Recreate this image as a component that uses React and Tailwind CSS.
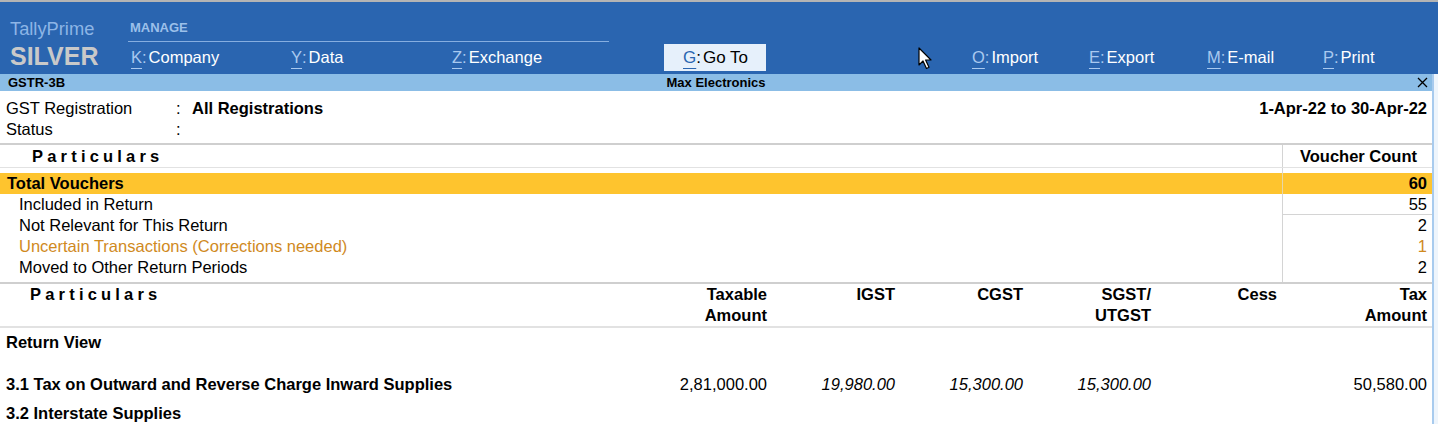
import React from 'react';

const font = { fontFamily: '"Liberation Sans", Arial, sans-serif' };

function MenuItem({ k, label, width }) {
    return (
        <div className={`h-[27px] flex items-center text-[16.5px] ${width}`}>
            <span className="text-[#a9c9ef] underline underline-offset-[5px] decoration-1">{k}</span>
            <span className="text-[#a9c9ef] mr-[2px]">:</span>
            <span className="text-white">{label}</span>
        </div>
    );
}

function Cursor() {
    return (
        <svg className="absolute left-[918px] top-[45px]" width="16" height="24" viewBox="0 0 16 24">
            <path d="M1 1 L1 18 L5 14 L8.5 21.5 L11 20.3 L7.6 13 L13 13 Z" fill="#fff" stroke="#000" strokeWidth="1.2" strokeLinejoin="round" />
        </svg>
    );
}

export default function App() {
    const upperRows = [
        { label: 'Included in Return', count: '55', line: true },
        { label: 'Not Relevant for This Return', count: '2' },
        { label: 'Uncertain Transactions (Corrections needed)', count: '1', warn: true },
        { label: 'Moved to Other Return Periods', count: '2' },
    ];

    return (
        <div className="w-[1438px] h-[434px] overflow-hidden bg-white text-black" style={font}>
            <div className="h-[2px] bg-[#b4b4b4]" />

            {/* Top bar */}
            <div className="relative h-[72px] bg-[#2a65b0] flex">
                <div className="w-[128px] pl-[10px] pt-[17px] flex flex-col">
                    <span className="text-[18.3px] leading-[20px] text-[#8db5e6]">TallyPrime</span>
                    <span className="text-[25px] leading-[30px] font-bold text-[#c9c9c9] mt-[2px]">SILVER</span>
                </div>
                <div className="flex-1 flex flex-col">
                    <div className="h-[40px] w-[481px] border-b border-[#86aee0] flex items-end pb-[6px] pl-[2px]">
                        <span className="text-[13px] leading-[14px] font-bold text-[#9cc0ea]">MANAGE</span>
                    </div>
                    <div className="flex items-start pt-[2px] pl-[3px]">
                        <MenuItem k="K" label="Company" width="w-[160px]" />
                        <MenuItem k="Y" label="Data" width="w-[161px]" />
                        <MenuItem k="Z" label="Exchange" width="w-[212px]" />
                        <div className="h-[27px] w-[102px] bg-[#e6f0fb] flex items-center pl-[19px] text-[17px] text-black">
                            <span className="text-[#2a65b0] underline underline-offset-[5px] decoration-1">G</span>
                            <span className="mr-[2px]">:</span>
                            <span>Go To</span>
                        </div>
                        <div className="w-[206px]" />
                        <MenuItem k="O" label="Import" width="w-[117px]" />
                        <MenuItem k="E" label="Export" width="w-[118px]" />
                        <MenuItem k="M" label="E-mail" width="w-[116px]" />
                        <MenuItem k="P" label="Print" width="w-[80px]" />
                    </div>
                </div>
                <Cursor />
            </div>

            <div className="flex">
                <div className="w-[1432px]">
                    {/* Title bar */}
                    <div className="h-[17px] bg-[#8bbde6] grid grid-cols-[1fr_auto_1fr] items-center text-[13px] font-bold leading-[17px]">
                        <span className="pl-[8px]">GSTR-3B</span>
                        <span>Max Electronics</span>
                        <div className="flex justify-end pr-[4px]">
                            <svg width="11" height="11" viewBox="0 0 11 11">
                                <path d="M1 1 L10 10 M10 1 L1 10" stroke="#000" strokeWidth="1.3" />
                            </svg>
                        </div>
                    </div>

                    {/* Info */}
                    <div className="pt-[7px] text-[16.5px]">
                        <div className="h-[21px] flex items-center">
                            <span className="w-[176px] pl-[6px]">GST Registration</span>
                            <span className="w-[16px]">:</span>
                            <span className="font-bold">All Registrations</span>
                            <span className="ml-auto pr-[5px] font-bold">1-Apr-22 to 30-Apr-22</span>
                        </div>
                        <div className="h-[21px] flex items-center">
                            <span className="w-[176px] pl-[6px]">Status</span>
                            <span className="w-[16px]">:</span>
                        </div>
                    </div>

                    {/* Voucher table */}
                    <div className="mt-[3px] border-t-2 border-b-2 border-[#cfcfcf] text-[16.5px]">
                        <div className="h-[23px] flex border-b border-[#e2e2e2]">
                            <div className="flex-1 pl-[32px] flex items-center font-bold tracking-[4.2px]">Particulars</div>
                            <div className="w-[150px] border-l border-[#d4d4d4] flex items-center justify-end pr-[15px] font-bold">Voucher Count</div>
                        </div>
                        <div className="h-[5px] flex">
                            <div className="flex-1" />
                            <div className="w-[150px] border-l border-[#d4d4d4]" />
                        </div>
                        <div className="h-[21px] flex bg-[#fec42e] font-bold">
                            <div className="flex-1 pl-[7px] flex items-center">Total Vouchers</div>
                            <div className="w-[150px] border-l border-[#e6d6a8] flex items-center justify-end pr-[5px]">60</div>
                        </div>
                        {upperRows.map((r) => (
                            <div key={r.label} className={`h-[21px] flex ${r.warn ? 'text-[#d08a1e]' : ''}`}>
                                <div className="flex-1 pl-[19px] flex items-center">{r.label}</div>
                                <div className={`w-[150px] border-l border-[#d4d4d4] flex items-center justify-end pr-[5px] ${r.line ? 'border-b' : ''}`}>{r.count}</div>
                            </div>
                        ))}
                        <div className="h-[4px] flex">
                            <div className="flex-1" />
                            <div className="w-[150px] border-l border-[#d4d4d4]" />
                        </div>
                    </div>

                    {/* Return table */}
                    <div className="flex border-b-2 border-[#e2e2e2] text-[16.5px] font-bold leading-[21px]">
                        <div className="flex-1 pl-[30px] tracking-[4.2px]">Particulars</div>
                        <div className="w-[128px] text-right">Taxable<br />Amount</div>
                        <div className="w-[128px] text-right">IGST</div>
                        <div className="w-[128px] text-right">CGST</div>
                        <div className="w-[128px] text-right">SGST/<br />UTGST</div>
                        <div className="w-[128px] text-right pr-[2px]">Cess</div>
                        <div className="w-[153px] text-right pr-[5px]">Tax<br />Amount</div>
                    </div>

                    <div className="text-[16.5px] leading-[21px]">
                        <div className="mt-[4px] pl-[6px] font-bold">Return View</div>
                        <div className="mt-[21px] flex">
                            <div className="flex-1 pl-[6px] font-bold">3.1 Tax on Outward and Reverse Charge Inward Supplies</div>
                            <div className="w-[128px] text-right">2,81,000.00</div>
                            <div className="w-[128px] text-right italic">19,980.00</div>
                            <div className="w-[128px] text-right italic">15,300.00</div>
                            <div className="w-[128px] text-right italic">15,300.00</div>
                            <div className="w-[128px]" />
                            <div className="w-[153px] text-right pr-[5px]">50,580.00</div>
                        </div>
                        <div className="mt-[8px] pl-[6px] font-bold">3.2 Interstate Supplies</div>
                    </div>
                </div>
                <div className="w-[6px] border-l-2 border-[#a8cbee] bg-[#eef5fc]" />
            </div>
        </div>
    );
}
